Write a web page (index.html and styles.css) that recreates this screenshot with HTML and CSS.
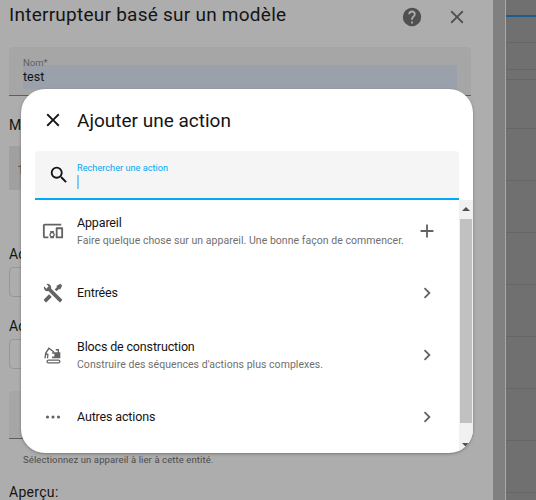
FILE: index.html
```html
<!DOCTYPE html>
<html lang="fr">

<head>
    <meta charset="UTF-8" />
    <meta name="viewport" content="width=device-width, initial-scale=1" />
    <title>Ajouter une action</title>
    <link rel="stylesheet" href="styles.css">
</head>

<body>
    <div class="page">

        <!-- Formulaire en arriere-plan -->
        <div class="panel">
            <header class="panel-header">
                <h1>Interrupteur basé sur un modèle</h1>
                <svg class="icon help" viewBox="0 0 24 24"><path d="M15.07,11.25L14.17,12.17C13.45,12.89 13,13.5 13,15H11V14.5C11,13.39 11.45,12.39 12.17,11.67L13.41,10.41C13.78,10.05 14,9.55 14,9C14,7.89 13.1,7 12,7A2,2 0 0,0 10,9H8A4,4 0 0,1 12,5A4,4 0 0,1 16,9C16,9.88 15.64,10.67 15.07,11.25M13,19H11V17H13M12,2A10,10 0 0,0 2,12A10,10 0 0,0 12,22A10,10 0 0,0 22,12C22,6.47 17.5,2 12,2Z" /></svg>
                <svg class="icon close" viewBox="0 0 24 24"><path d="M19,6.41L17.59,5L12,10.59L6.41,5L5,6.41L10.59,12L5,17.59L6.41,19L12,13.41L17.59,19L19,17.59L13.41,12L19,6.41Z" /></svg>
            </header>

            <div class="field field-name">
                <span class="field-label">Nom*</span>
                <span class="field-value">test</span>
            </div>

            <p class="section-label label-mode">Mode</p>
            <div class="field-mode">1</div>

            <p class="section-label label-on">Action</p>
            <div class="field-action"></div>

            <p class="section-label label-off">Action</p>
            <div class="field-action"></div>

            <div class="field-device"></div>
            <p class="hint">Sélectionnez un appareil à lier à cette entité.</p>

            <p class="preview">Aperçu:</p>
        </div>

        <div class="strip"></div>

        <!-- Page derriere le panneau -->
        <div class="side">
            <div class="side-row side-top"></div>
            <div class="side-row side-a"></div>
            <div class="side-row side-b"></div>
            <div class="side-row side-c"></div>
            <div class="side-row"></div>
            <div class="side-row"></div>
            <div class="side-row"></div>
            <div class="side-row"></div>
            <div class="side-row"></div>
            <div class="side-row"></div>
            <div class="side-row"></div>
        </div>
    </div>

    <!-- Boite de dialogue -->
    <div class="dialog">
        <div class="dialog-header">
            <svg class="icon dialog-close" viewBox="0 0 24 24"><path d="M19,6.41L17.59,5L12,10.59L6.41,5L5,6.41L10.59,12L5,17.59L6.41,19L12,13.41L17.59,19L19,17.59L13.41,12L19,6.41Z" /></svg>
            <h2>Ajouter une action</h2>
        </div>

        <div class="search">
            <svg class="icon search-icon" viewBox="0 0 24 24"><path d="M9.5,3A6.5,6.5 0 0,1 16,9.5C16,11.11 15.41,12.59 14.44,13.73L14.71,14H15.5L20.5,19L19,20.5L14,15.5V14.71L13.73,14.44C12.59,15.41 11.11,16 9.5,16A6.5,6.5 0 0,1 3,9.5A6.5,6.5 0 0,1 9.5,3M9.5,5C7,5 5,7 5,9.5C5,12 7,14 9.5,14C12,14 14,12 14,9.5C14,7 12,5 9.5,5Z" /></svg>
            <div class="search-box">
                <span class="search-label">Rechercher une action</span>
                <span class="caret"></span>
            </div>
        </div>

        <div class="list-wrap">
            <div class="list">
                <div class="item">
                    <svg class="icon item-icon" viewBox="0 0 24 24"><path d="M3 6H21V4H3C1.9 4 1 4.9 1 6V18C1 19.1 1.9 20 3 20H7V18H3V6M13 12H9V13.78C8.39 14.33 8 15.11 8 16C8 16.89 8.39 17.67 9 18.22V20H13V18.22C13.61 17.67 14 16.88 14 16S13.61 14.33 13 13.78V12M11 17.5C10.17 17.5 9.5 16.83 9.5 16S10.17 14.5 11 14.5 12.5 15.17 12.5 16 11.83 17.5 11 17.5M22 8H16C15.5 8 15 8.5 15 9V19C15 19.5 15.5 20 16 20H22C22.5 20 23 19.5 23 19V9C23 8.5 22.5 8 22 8M21 18H17V10H21V18Z" /></svg>
                    <div class="item-text">
                        <div class="item-title">Appareil</div>
                        <div class="item-sub">Faire quelque chose sur un appareil. Une bonne façon de commencer.</div>
                    </div>
                    <svg class="icon item-end" viewBox="0 0 24 24"><path d="M19,13H13V19H11V13H5V11H11V5H13V11H19V13Z" /></svg>
                </div>
                <div class="item">
                    <svg class="icon item-icon" viewBox="0 0 24 24"><path d="M21.71 20.29L20.29 21.71A1 1 0 0 1 18.88 21.71L7 9.85A3.81 3.81 0 0 1 6 10A4 4 0 0 1 2.22 4.7L4.76 7.24L5.29 6.71L6.71 5.29L7.24 4.76L4.7 2.22A4 4 0 0 1 10 6A3.81 3.81 0 0 1 9.85 7L21.71 18.88A1 1 0 0 1 21.71 20.29M2.29 18.88A1 1 0 0 0 2.29 20.29L3.71 21.71A1 1 0 0 0 5.12 21.71L10.59 16.25L7.76 13.42M20 2L16 4V6L13.83 8.17L15.83 10.17L18 8H20L22 4Z" /></svg>
                    <div class="item-text">
                        <div class="item-title">Entrées</div>
                    </div>
                    <svg class="icon item-end" viewBox="0 0 24 24"><path d="M8.59,16.58L13.17,12L8.59,7.41L10,6L16,12L10,18L8.59,16.58Z" /></svg>
                </div>
                <div class="item">
                    <svg class="icon item-icon" viewBox="0 0 24 24"><path d="M11 9H20V15.5H11V13.5H13.5V10.5H11Z M15 5.5H18.5V9H17V7H15Z M7 17H18A2.2 2.2 0 0 1 18 21.4H7A2.2 2.2 0 0 1 7 17M7 18.4A.8.8 0 0 0 7 20H18A.8.8 0 0 0 18 18.4Z M2.5 15.5L3.4 9.5L7.4 3.5L13.5 8.2L12.6 9.4L7.8 5.8L4.9 10L7.2 11L6.7 15.5H5.3L5.7 12L4.6 11.6L4 15.5Z" /></svg>
                    <div class="item-text">
                        <div class="item-title">Blocs de construction</div>
                        <div class="item-sub">Construire des séquences d'actions plus complexes.</div>
                    </div>
                    <svg class="icon item-end" viewBox="0 0 24 24"><path d="M8.59,16.58L13.17,12L8.59,7.41L10,6L16,12L10,18L8.59,16.58Z" /></svg>
                </div>
                <div class="item">
                    <svg class="icon item-icon" viewBox="0 0 24 24"><circle cx="6" cy="12" r="1.7" /><circle cx="12" cy="12" r="1.7" /><circle cx="18" cy="12" r="1.7" /></svg>
                    <div class="item-text">
                        <div class="item-title">Autres actions</div>
                    </div>
                    <svg class="icon item-end" viewBox="0 0 24 24"><path d="M8.59,16.58L13.17,12L8.59,7.41L10,6L16,12L10,18L8.59,16.58Z" /></svg>
                </div>
            </div>

            <div class="scrollbar">
                <div class="arrow arrow-up"></div>
                <div class="thumb"></div>
                <div class="arrow arrow-down"></div>
            </div>
        </div>
    </div>
</body>

</html>
```

FILE: styles.css
```css
* {
    box-sizing: border-box;
    margin: 0;
    padding: 0;
}

html,
body {
    height: 500px;
    overflow: hidden;
}

body {
    font-family: Roboto, "Liberation Sans", sans-serif;
    background-color: #707070;
    color: #141414;
    position: relative;
}

.icon {
    width: 22px;
    height: 22px;
    flex-shrink: 0;
    fill: currentColor;
}

.page {
    display: flex;
    height: 500px;
}

/* Panneau du fond */
.panel {
    width: 493px;
    height: 500px;
    background: #adadad;
    padding: 0 22px 0 9px;
    overflow: hidden;
    flex-shrink: 0;
}

.panel-header {
    height: 47px;
    display: flex;
    align-items: flex-start;
    padding-top: 6px;
}

.panel-header h1 {
    font-size: 19px;
    font-weight: 400;
    line-height: 18px;
    letter-spacing: 0.25px;
    flex: 1;
    white-space: nowrap;
}

.help {
    color: #505050;
    margin-right: 23px;
}

.close {
    color: #505050;
    margin-right: 3px;
}

.field {
    background: #a6a6a6;
    border-bottom: 1px solid #5e5e5e;
    border-radius: 4px 4px 0 0;
    height: 49px;
    padding: 11px 14px 0;
}

.field-label {
    display: block;
    font-size: 9.5px;
    line-height: 10px;
    color: #5d5d5d;
}

.field-value {
    display: block;
    background: #9aa1ab;
    font-size: 12.5px;
    line-height: 24px;
    height: 24px;
    margin-top: -3px;
}

.section-label {
    font-size: 14px;
    line-height: 20px;
}

.label-mode {
    margin-top: 19px;
}

.field-mode {
    background: #a0a0a0;
    height: 44px;
    margin-top: 11px;
    padding: 16px 8px 0;
    font-size: 13px;
    color: #5d5d5d;
}

.label-on {
    margin-top: 54px;
}

.label-off {
    margin-top: 19px;
}

.field-action {
    height: 30px;
    margin-top: 3px;
    border: 1px solid #979797;
    border-radius: 4px;
}

.field-device {
    height: 48px;
    margin-top: 22px;
    background: #a6a6a6;
    border-bottom: 1px solid #5e5e5e;
    border-radius: 4px 4px 0 0;
}

.hint {
    font-size: 9.5px;
    line-height: 14px;
    letter-spacing: 0.1px;
    color: #4c4c4c;
    padding: 14px 0 0 14px;
}

.preview {
    font-size: 14px;
    line-height: 20px;
    margin-top: 15px;
    letter-spacing: 0.3px;
}

.strip {
    width: 13px;
    background: #808080;
    border-right: 1px solid #a8a8a8;
    flex-shrink: 0;
}

.side {
    flex: 1;
}

.side-row {
    height: 52px;
    border-bottom: 1px solid #666;
}

.side-top {
    height: 28px;
}

.side-top::before {
    content: "";
    display: block;
    height: 2px;
    margin-top: 15px;
    background: #1d5c8e;
}

.side-a {
    height: 27px;
}

.side-b {
    height: 10px;
}

.side-c {
    height: 49px;
}

/* Boite de dialogue */
.dialog {
    position: absolute;
    top: 89px;
    left: 21px;
    width: 452px;
    height: 364px;
    background: #fff;
    border-radius: 24px;
    box-shadow: 0 1px 3px rgba(0, 0, 0, 0.3);
    overflow: hidden;
    display: flex;
    flex-direction: column;
}

.dialog-header {
    height: 62px;
    flex-shrink: 0;
    display: flex;
    align-items: center;
    padding-left: 21px;
}

.dialog-close {
    color: #141414;
    margin-right: 13px;
}

.dialog-header h2 {
    font-size: 19px;
    font-weight: 400;
    margin-top: 1px;
}

.search {
    height: 49px;
    margin: 0 14px;
    flex-shrink: 0;
    background: #f5f5f5;
    border-bottom: 2px solid #03a9f4;
    border-radius: 4px 4px 0 0;
    display: flex;
    padding-left: 13px;
}

.search-icon {
    margin-top: 13px;
    margin-right: 7px;
    color: #141414;
}

.search-box {
    padding: 11px 0 0;
}

.search-label {
    display: block;
    font-size: 9.2px;
    line-height: 11px;
    color: #03a9f4;
}

.caret {
    display: block;
    width: 2px;
    height: 14px;
    margin-top: 2px;
    background: #7cccf5;
}

.list-wrap {
    flex: 1;
    min-height: 0;
    display: flex;
}

.list {
    flex: 1;
    min-width: 0;
}

.item {
    height: 62px;
    display: flex;
    align-items: center;
    padding-left: 21px;
}

.item-icon {
    color: #636363;
    margin-right: 13px;
}

.item-text {
    flex: 1;
    min-width: 0;
}

.item-title {
    font-size: 12.5px;
    line-height: 20px;
    letter-spacing: -0.15px;
    color: #141414;
}

.item-sub {
    font-size: 10.5px;
    line-height: 16px;
    letter-spacing: 0.04px;
    color: #6f6f6f;
    white-space: nowrap;
}

.item-end {
    color: #636363;
    margin-right: 21px;
}

/* Barre de defilement */
.scrollbar {
    width: 14px;
    flex-shrink: 0;
    background: #f1f1f1;
    display: flex;
    flex-direction: column;
    align-items: center;
}

.arrow {
    height: 19px;
    width: 100%;
    flex-shrink: 0;
    display: flex;
    justify-content: center;
}

.arrow::before {
    content: "";
    height: 0;
    border-left: 4px solid transparent;
    border-right: 4px solid transparent;
}

.arrow-up::before {
    border-bottom: 4px solid #505050;
    margin-top: 7px;
}

.arrow-down {
    margin-top: auto;
}

.arrow-down::before {
    border-top: 4px solid #505050;
    margin-top: 9px;
}

.thumb {
    width: 12px;
    height: 204px;
    background: #c1c1c1;
}
```
